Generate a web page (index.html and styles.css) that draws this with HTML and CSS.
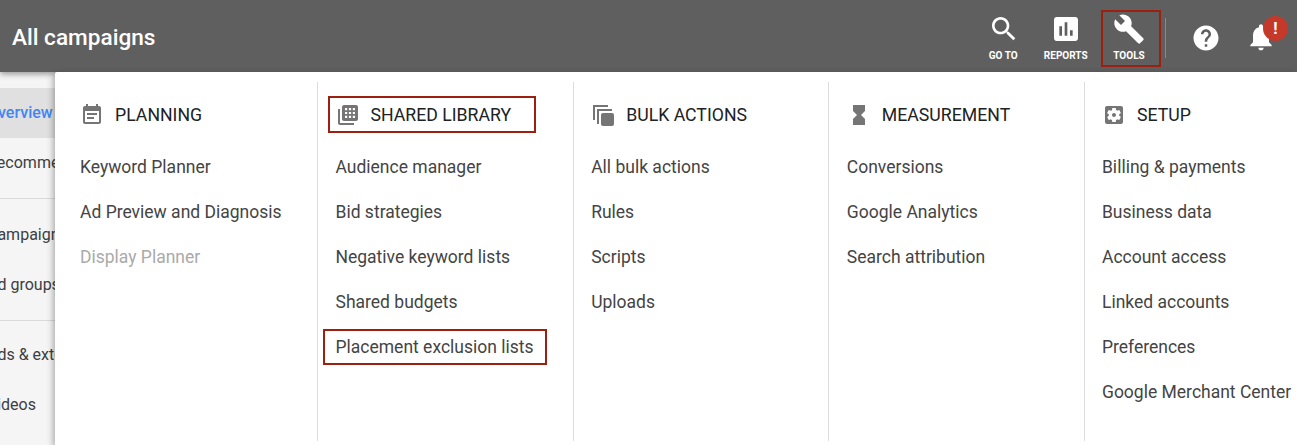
FILE: index.html
```html
<!DOCTYPE html>
<html lang="en">
  <head>
    <meta charset="UTF-8" />
    <title>All campaigns</title>
    <link rel="stylesheet" href="styles.css">
  </head>
  <body>
    <div class="top-bar">
      <h1>All campaigns</h1>
      <div class="top-actions">
        <a class="action">
          <svg viewBox="0 0 24 24" class="action-icon"><path d="M15.5 14h-.79l-.28-.27C15.41 12.59 16 11.11 16 9.5 16 5.91 13.09 3 9.5 3S3 5.91 3 9.5 5.91 16 9.5 16c1.61 0 3.09-.59 4.23-1.57l.27.28v.79l5 4.99L20.49 19l-4.99-5zm-6 0C7.01 14 5 11.99 5 9.5S7.01 5 9.5 5 14 7.01 14 9.5 11.99 14 9.5 14z"/></svg>
          <span>GO TO</span>
        </a>
        <a class="action">
          <svg viewBox="0 0 24 24" class="action-icon"><path d="M19 3H5c-1.1 0-2 .9-2 2v14c0 1.1.9 2 2 2h14c1.1 0 2-.9 2-2V5c0-1.1-.9-2-2-2zM9 17H7v-7h2v7zm4 0h-2V7h2v10zm4 0h-2v-4h2v4z"/></svg>
          <span>REPORTS</span>
        </a>
        <a class="action action-marked">
          <svg viewBox="0 0 24 24" class="action-icon"><path d="M22.7 19l-9.1-9.1c.9-2.3.4-5-1.5-6.9-2-2-5-2.4-7.4-1.3L9 6 6 9 1.6 4.7C.4 7.1.9 10.1 2.9 12.1c1.9 1.9 4.6 2.4 6.9 1.5l9.1 9.1c.4.4 1 .4 1.4 0l2.3-2.3c.5-.4.5-1.1.1-1.4z"/></svg>
          <span>TOOLS</span>
        </a>
        <div class="bar-divider"></div>
        <svg viewBox="0 0 24 24" class="help-icon"><path d="M12 2C6.48 2 2 6.48 2 12s4.48 10 10 10 10-4.48 10-10S17.52 2 12 2zm1 17h-2v-2h2v2zm2.07-7.75l-.9.92C13.45 12.9 13 13.5 13 15h-2v-.5c0-1.1.45-2.1 1.17-2.83l1.24-1.26c.37-.36.59-.86.59-1.41 0-1.1-.9-2-2-2s-2 .9-2 2H8c0-2.21 1.79-4 4-4s4 1.79 4 4c0 .88-.36 1.68-.93 2.25z"/></svg>
        <div class="bell">
          <svg viewBox="0 0 24 24" class="bell-icon"><path d="M12 22c1.1 0 2-.9 2-2h-4c0 1.1.89 2 2 2zm6-6v-5c0-3.07-1.64-5.64-4.5-6.32V4c0-.83-.67-1.5-1.5-1.5s-1.5.67-1.5 1.5v.68C7.63 5.36 6 7.92 6 11v5l-2 2v1h16v-1l-2-2z"/></svg>
          <span class="badge">!</span>
        </div>
      </div>
    </div>

    <div class="side-nav">
      <div class="side-group">
        <div class="side-item side-active"><span>Overview</span></div>
        <div class="side-item"><span>Recommendations</span></div>
      </div>
      <div class="side-group">
        <div class="side-item"><span>Campaigns</span></div>
        <div class="side-item"><span>Ad groups</span></div>
      </div>
      <div class="side-group">
        <div class="side-item"><span>Ads &amp; extensions</span></div>
        <div class="side-item"><span>Videos</span></div>
      </div>
    </div>

    <div class="tools-menu">
      <div class="menu-col">
        <div class="col-head">
          <svg viewBox="0 0 24 24" class="col-icon"><path d="M17 10H7v2h10v-2zm2-7h-1V1h-2v2H8V1H6v2H5c-1.11 0-1.99.9-1.99 2L3 19c0 1.1.89 2 2 2h14c1.1 0 2-.9 2-2V5c0-1.1-.9-2-2-2zm0 16H5V8h14v11zm-5-5H7v2h7v-2z"/></svg>
          <span>PLANNING</span>
        </div>
        <a class="menu-link">Keyword Planner</a>
        <a class="menu-link">Ad Preview and Diagnosis</a>
        <a class="menu-link disabled">Display Planner</a>
      </div>
      <div class="menu-col">
        <div class="col-head col-head-marked">
          <svg viewBox="0 0 24 24" class="col-icon"><path d="M4 6H2v14c0 1.1.9 2 2 2h14v-2H4V6z"/><path fill-rule="evenodd" d="M8 2h12c1.1 0 2 .9 2 2v12c0 1.1-.9 2-2 2H8c-1.1 0-2-.9-2-2V4c0-1.1.9-2 2-2zm1 3v2.2h2.2V5H9zm3.9 0v2.2h2.2V5h-2.2zm3.9 0v2.2H19V5h-2.2zM9 8.9v2.2h2.2V8.9H9zm3.9 0v2.2h2.2V8.9h-2.2zm3.9 0v2.2H19V8.9h-2.2zM9 12.8V15h2.2v-2.2H9zm3.9 0V15h2.2v-2.2h-2.2zm3.9 0V15H19v-2.2h-2.2z"/></svg>
          <span>SHARED LIBRARY</span>
        </div>
        <a class="menu-link">Audience manager</a>
        <a class="menu-link">Bid strategies</a>
        <a class="menu-link">Negative keyword lists</a>
        <a class="menu-link">Shared budgets</a>
        <a class="menu-link link-marked">Placement exclusion lists</a>
      </div>
      <div class="menu-col">
        <div class="col-head">
          <svg viewBox="0 0 24 24" class="col-icon"><path d="M2 2h15v2H4v13H2z"/><path d="M6 6h15v2H8v13H6z"/><rect x="10" y="10" width="13" height="13" rx="2"/></svg>
          <span>BULK ACTIONS</span>
        </div>
        <a class="menu-link">All bulk actions</a>
        <a class="menu-link">Rules</a>
        <a class="menu-link">Scripts</a>
        <a class="menu-link">Uploads</a>
      </div>
      <div class="menu-col">
        <div class="col-head">
          <svg viewBox="0 0 24 24" class="col-icon"><path d="M6 2v6h.01L6 8.01 10 12l-4 4 .01.01H6V22h12v-5.99h-.01L18 16l-4-4 4-3.99-.01-.01H18V2H6z"/></svg>
          <span>MEASUREMENT</span>
        </div>
        <a class="menu-link">Conversions</a>
        <a class="menu-link">Google Analytics</a>
        <a class="menu-link">Search attribution</a>
      </div>
      <div class="menu-col menu-col-last">
        <div class="col-head">
          <svg viewBox="0 0 24 24" class="col-icon"><path d="M12 10c-1.1 0-2 .89-2 2s.9 2 2 2 2-.89 2-2-.9-2-2-2zm7-7H5c-1.1 0-2 .89-2 2v14c0 1.1.9 2 2 2h14c1.1 0 2-.89 2-2V5c0-1.11-.9-2-2-2zm-1.75 9c0 .24-.02.47-.05.71l1.48 1.16c.13.11.17.3.08.45l-1.4 2.42c-.09.15-.27.21-.43.15l-1.74-.7c-.36.28-.76.51-1.18.69l-.26 1.85c-.03.17-.18.3-.35.3h-2.8c-.17 0-.32-.13-.35-.29l-.26-1.85c-.43-.18-.82-.41-1.18-.69l-1.74.7c-.16.06-.34 0-.43-.15l-1.4-2.42c-.09-.15-.05-.34.08-.45l1.48-1.16c-.03-.23-.05-.47-.05-.71 0-.24.02-.47.05-.71l-1.48-1.16c-.13-.11-.17-.3-.08-.45l1.4-2.42c.09-.15.27-.21.43-.15l1.74.7c.36-.28.76-.51 1.18-.69l.26-1.85c.03-.17.18-.3.35-.3h2.8c.17 0 .32.13.35.29l.26 1.85c.43.18.82.41 1.18.69l1.74-.7c.16-.06.34 0 .43.15l1.4 2.42c.09.15.05.34-.08.45l-1.48 1.16c.03.23.05.47.05.71z"/></svg>
          <span>SETUP</span>
        </div>
        <a class="menu-link">Billing &amp; payments</a>
        <a class="menu-link">Business data</a>
        <a class="menu-link">Account access</a>
        <a class="menu-link">Linked accounts</a>
        <a class="menu-link">Preferences</a>
        <a class="menu-link">Google Merchant Center</a>
      </div>
    </div>
  </body>
</html>
```

FILE: styles.css
```css
html, body {
  height: 100%;
}

body {
  margin: 0;
  font-family: Roboto, "Liberation Sans", sans-serif;
  background-color: #f5f5f5;
  overflow: hidden;
  position: relative;
}

.top-bar {
  height: 72px;
  background-color: #5f5f5f;
  display: flex;
  align-items: center;
  justify-content: space-between;
  box-shadow: 0 2px 6px rgba(0, 0, 0, 0.4);
  position: relative;
}

.top-bar h1 {
  margin: 3px 0 0 12px;
  font-size: 22.6px;
  font-weight: 500;
  color: #fff;
}

.top-actions {
  display: flex;
  align-items: center;
  height: 100%;
  box-sizing: border-box;
  padding-top: 4px;
}

.action {
  width: 62.5px;
  height: 57px;
  align-self: flex-start;
  margin-top: 6px;
  padding-top: 3px;
  box-sizing: border-box;
  display: flex;
  flex-direction: column;
  align-items: center;
  color: #fff;
  fill: #fff;
  font-size: 10px;
  font-weight: 700;
}

.action span {
  margin-top: 5px;
  margin-right: 1px;
  white-space: nowrap;
}

.action-icon {
  width: 32px;
  height: 32px;
  flex-shrink: 0;
}

.action-marked {
  width: 60px;
  margin-left: 3.5px;
  padding-top: 1px;
  padding-right: 4px;
  border: 2px solid #9c1f10;
}

.action-marked span {
  margin-right: 0;
}

.bar-divider {
  width: 1px;
  height: 40px;
  background-color: #8a8a8a;
  margin-left: 4px;
}

.help-icon {
  width: 30px;
  height: 30px;
  fill: #fff;
  margin-left: 25px;
}

.bell {
  position: relative;
  width: 32px;
  height: 32px;
  margin-left: 24px;
  margin-right: 20px;
  margin-bottom: 2px;
}

.bell-icon {
  width: 32px;
  height: 32px;
  fill: #fff;
}

.badge {
  position: absolute;
  top: -5px;
  right: -11px;
  width: 25px;
  height: 25px;
  border-radius: 50%;
  background-color: #c5392b;
  color: #fff;
  font-size: 16px;
  font-weight: 700;
  line-height: 25px;
  text-align: center;
}

.side-nav {
  width: 55px;
  overflow: hidden;
  padding-top: 6px;
  font-size: 16px;
  color: #3c4043;
}

.side-group {
  border-bottom: 1px solid #dadada;
  padding: 10px 0;
}

.side-group:nth-child(2) {
  padding-top: 11px;
}

.side-group:last-child {
  padding-top: 9px;
  border-bottom: none;
}

.side-item {
  height: 50px;
  line-height: 50px;
  white-space: nowrap;
}

.side-item span {
  margin-left: -13px;
}

.side-active {
  background-color: #e0e0e0;
  color: #4285f4;
  font-weight: 500;
}

.tools-menu {
  position: absolute;
  top: 72px;
  left: 55px;
  right: 0;
  bottom: 0;
  display: flex;
  background-color: #fff;
  padding-top: 10px;
  padding-bottom: 4px;
  border-radius: 2px 0 0 0;
  box-shadow: -2px 2px 6px rgba(0, 0, 0, 0.3);
}

.menu-col {
  width: 255.67px;
  flex-shrink: 0;
  box-sizing: border-box;
  border-right: 1px solid #dcdcdc;
  padding-left: 17.5px;
  display: flex;
  flex-direction: column;
  align-items: flex-start;
  white-space: nowrap;
}

.menu-col:first-child {
  width: 263px;
  padding-left: 25px;
}

.menu-col-last {
  padding-left: 17px;
}

.col-head {
  height: 37px;
  margin-top: 14px;
  margin-bottom: 12px;
  display: flex;
  align-items: center;
  gap: 11px;
  font-size: 17.7px;
  color: #202124;
}

.col-icon {
  width: 24px;
  height: 24px;
  fill: #757575;
  flex-shrink: 0;
}

.col-head-marked {
  border: 2px solid #9c1f10;
  box-sizing: border-box;
  width: 208px;
  margin-left: -8px;
  padding-left: 6px;
}

.menu-link {
  height: 45px;
  line-height: 45px;
  font-size: 17.5px;
  color: #444;
}

.menu-link.disabled {
  color: #aaa;
}

.link-marked {
  border: 2px solid #9c1f10;
  box-sizing: border-box;
  height: 36px;
  line-height: 32px;
  margin-top: 4px;
  margin-left: -13px;
  padding: 0 11px;
}
```
